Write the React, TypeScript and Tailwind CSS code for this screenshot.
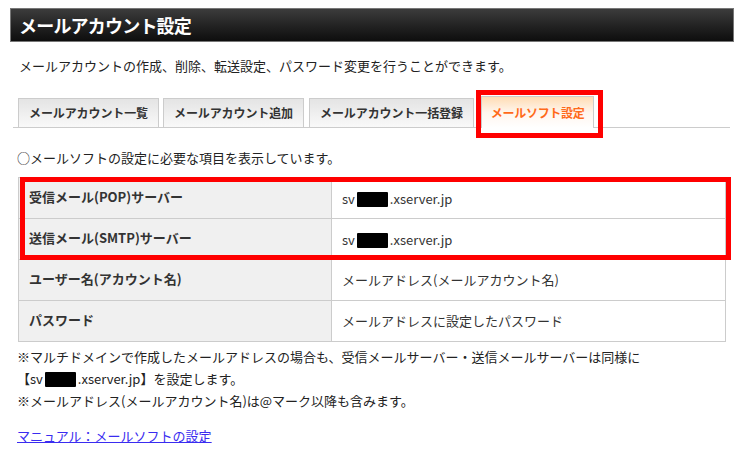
const font = { fontFamily: '"Noto Sans CJK JP", "Liberation Sans", sans-serif' };

const Masked = ({ w = 31 }: { w?: number }) => (
	<span
		className="inline-block h-[15px] bg-black align-[-3px] mx-[2px] rounded-[1px]"
		style={{ width: w }}
	/>
);

const tabs = [
	"メールアカウント一覧",
	"メールアカウント追加",
	"メールアカウント一括登録",
];

const rows = [
	{ label: "受信メール(POP)サーバー", value: "server" },
	{ label: "送信メール(SMTP)サーバー", value: "server" },
	{ label: "ユーザー名(アカウント名)", value: "メールアドレス(メールアカウント名)" },
	{ label: "パスワード", value: "メールアドレスに設定したパスワード" },
];

const App = () => {
	return (
		<div
			className="w-[754px] h-[464px] bg-white text-[#222] overflow-hidden pt-[8px]"
			style={font}
		>
			<div className="mx-[10px] w-[724px] h-[34px] border border-[#777] bg-gradient-to-b from-[#3c3c3c] to-[#0e0e0e] flex items-center px-[8px]">
				<h1 className="text-white font-bold text-[18px] leading-none tracking-[-0.8px]">
					メールアカウント設定
				</h1>
			</div>

			<p className="mt-[14px] ml-[19px] text-[13px] leading-[20px]">
				メールアカウントの作成、削除、転送設定、パスワード変更を行うことができます。
			</p>

			<div className="mt-[22px] ml-[13px] w-[717px] h-[30px] border-b border-[#ccc] flex items-end pl-[5px]">
				{tabs.map((t, i) => (
					<div
						key={t}
						className={`h-[29px] px-[10px] flex items-center border border-b-0 border-[#ccc] bg-gradient-to-b from-[#e4e4e4] to-[#f9f9f9] text-[12px] font-bold text-[#333] tracking-[-0.1px] ${
							i === 0 ? "" : i === 1 ? "ml-[4px]" : "ml-[5px]"
						}`}
					>
						{t}
					</div>
				))}
				<div className="relative ml-[7px] h-[32px] mb-[-1px] px-[9px] flex items-center border border-b-0 border-[#ccc] bg-gradient-to-b from-[#ffdcb4] via-[#fff6ee] to-white text-[12px] font-bold text-[#ff6a1a] tracking-[-0.3px]">
					メールソフト設定
					<div className="absolute left-[-6px] right-[-10px] top-[-7px] bottom-[-10px] border-[5px] border-[#f00]" />
				</div>
			</div>

			<p className="mt-[20px] ml-[17px] text-[13px] leading-[20px]">
				○メールソフトの設定に必要な項目を表示しています。
			</p>

			<div className="relative mt-[9px] ml-[18px] w-[708px]">
				<table className="w-full border-collapse border border-[#ccc] text-[13px]">
					<tbody>
						{rows.map((r) => (
							<tr key={r.label} className="h-[41px]">
								<th className="w-[313px] bg-[#f0f0f0] border border-[#ccc] text-left font-bold text-[#333] pl-[10px] pb-[2px]">
									{r.label}
								</th>
								<td className="border border-[#ccc] pl-[10px] text-[#333]">
									{r.value === "server" ? (
										<span className="inline-block pt-[2px]">
											sv<Masked />.xserver.jp
										</span>
									) : (
										r.value
									)}
								</td>
							</tr>
						))}
					</tbody>
				</table>
				<div className="absolute left-[2px] top-[0px] w-[711px] h-[83px] border-[5px] border-[#f00]" />
			</div>

			<div className="mt-[4px] ml-[17px] text-[13px] leading-[22px]">
				<p>
					※マルチドメインで作成したメールアドレスの場合も、受信メールサーバー・送信メールサーバーは同様に
				</p>
				<p>
					【sv<Masked />.xserver.jp】を設定します。
				</p>
				<p>※メールアドレス(メールアカウント名)は@マーク以降も含みます。</p>
			</div>

			<a
				href="#"
				className="block mt-[14px] ml-[17px] w-fit text-[13px] leading-[20px] text-[#3a2cf0] underline"
			>
				マニュアル：メールソフトの設定
			</a>
		</div>
	);
};

export default App;
